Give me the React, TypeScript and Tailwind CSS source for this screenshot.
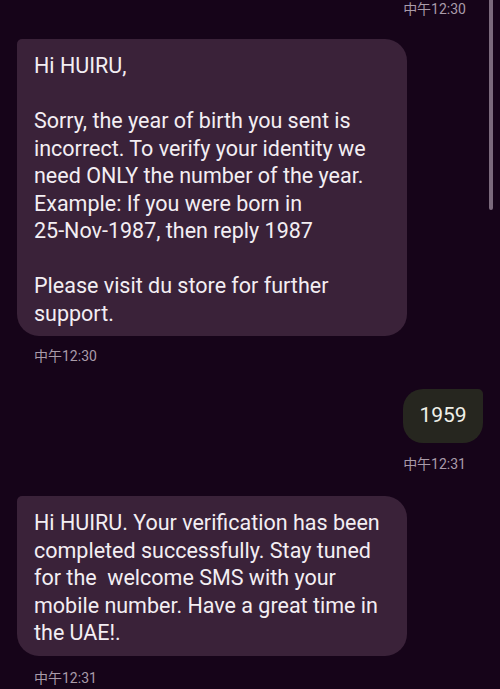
import React from 'react';

const Stamp = ({ text, right }: { text: string; right?: boolean }) => (
  <div
    className={`text-[14px] leading-[16px] text-[#a99ba9] ${right ? 'text-right pr-[34px]' : 'pl-[34px]'}`}
    style={{ fontFamily: 'Roboto, "Noto Sans CJK SC", sans-serif' }}
  >
    {text}
  </div>
);

const Incoming = ({ lines }: { lines: string[] }) => (
  <div className="pl-[17px]">
    <div className="w-[390px] bg-[#3a2239] rounded-[22px] rounded-tl-[5px] pl-[17px] pr-3 pt-[13px] pb-[9px] text-[21.5px] leading-[27.5px] text-[#f3eef3]">
      {lines.map((l, i) => (
        <div key={i} className="whitespace-pre">
          {l || '\u00a0'}
        </div>
      ))}
    </div>
  </div>
);

export default function App() {
  return (
    <div
      className="relative w-[500px] h-[689px] overflow-hidden bg-[#160419]"
      style={{ fontFamily: 'Roboto, "Noto Sans CJK SC", sans-serif' }}
    >
      {/* scrollbar */}
      <div className="absolute right-[7px] top-0 w-[4px] h-[210px] rounded-b-full bg-[#7b6a7c]" />

      <div className="flex flex-col">
        <div className="pt-px">
          <Stamp text="中午12:30" right />
        </div>

        <div className="mt-[22px]">
          <Incoming
            lines={[
              'Hi HUIRU,',
              '',
              'Sorry, the year of birth you sent is',
              'incorrect. To verify your identity we',
              'need ONLY the number of the year.',
              'Example: If you were born in',
              '25-Nov-1987, then reply 1987',
              '',
              'Please visit du store for further',
              'support.',
            ]}
          />
          <div className="mt-[12px]">
            <Stamp text="中午12:30" />
          </div>
        </div>

        <div className="mt-[25px] flex flex-col items-end pr-[17px]">
          <div className="h-[54px] w-[80px] flex items-center justify-center bg-[#26261f] rounded-[20px] rounded-tr-[5px] text-[21px] text-[#f0f0e8]">
            1959
          </div>
        </div>
        <div className="mt-[13px]">
          <Stamp text="中午12:31" right />
        </div>

        <div className="mt-[24px]">
          <Incoming
            lines={[
              'Hi HUIRU. Your verification has been',
              'completed successfully. Stay tuned',
              'for the  welcome SMS with your',
              'mobile number. Have a great time in',
              'the UAE!.',
            ]}
          />
          <div className="mt-[14px]">
            <Stamp text="中午12:31" />
          </div>
        </div>
      </div>
    </div>
  );
}
